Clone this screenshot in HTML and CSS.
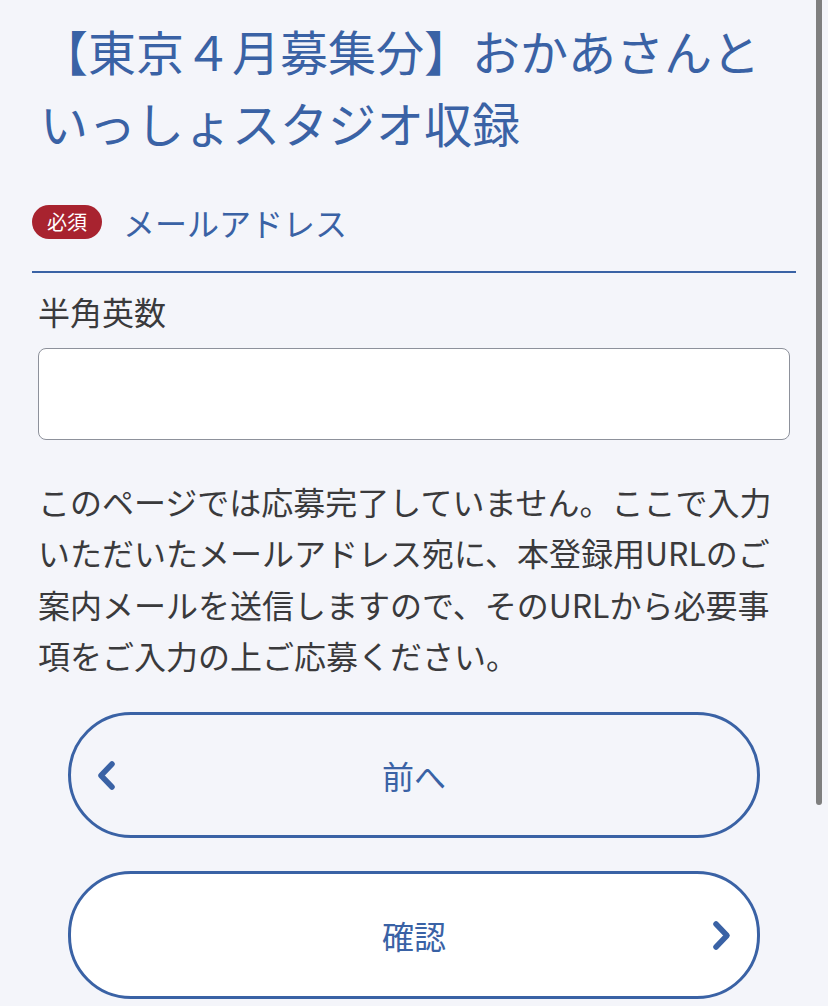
FILE: index.html
```html
<!DOCTYPE html>
<html lang="ja">
<head>
<meta charset="utf-8">
<title>メールアドレス入力</title>
<link rel="stylesheet" href="styles.css">
</head>
<body>
<main class="page">
  <h1 class="title">【東京４月募集分】おかあさんといっしょスタジオ収録</h1>

  <div class="field-head">
    <span class="badge">必須</span>
    <span class="field-name">メールアドレス</span>
  </div>

  <div class="field-body">
    <label class="hint" for="email">半角英数</label>
    <input class="text-input" id="email" type="email">
    <p class="note">このページでは応募完了していません。ここで入力いただいたメールアドレス宛に、本登録用URLのご案内メールを送信しますので、そのURLから必要事項をご入力の上ご応募ください。</p>
  </div>

  <div class="actions">
    <button class="btn btn-back" type="button">
      <svg class="chev" viewBox="0 0 24 32" width="24" height="32" aria-hidden="true"><polyline points="17,5 6,16.5 17,28" fill="none" stroke="currentColor" stroke-width="5.5" stroke-linecap="round" stroke-linejoin="round"/></svg>
      <span class="btn-label">前へ</span>
      <span></span>
    </button>
    <button class="btn btn-next" type="button">
      <span></span>
      <span class="btn-label">確認</span>
      <svg class="chev chev-right" viewBox="0 0 24 32" width="24" height="32" aria-hidden="true"><polyline points="7,5 18,16.5 7,28" fill="none" stroke="currentColor" stroke-width="5.5" stroke-linecap="round" stroke-linejoin="round"/></svg>
    </button>
  </div>
</main>
<div class="scroll-indicator"></div>
</body>
</html>
```

FILE: styles.css
```css
html, body {
  margin: 0;
  padding: 0;
  overflow: hidden;
  background: #f4f5fa;
}

body {
  font-family: "Noto Sans CJK JP", "Noto Sans", sans-serif;
  color: #3a3a3c;
}

.page {
  padding: 0 32px;
}

.title {
  margin: 14px 0 0;
  padding: 0 6px 0 8px;
  font-size: 48px;
  line-height: 72px;
  font-weight: 400;
  color: #3a62a5;
}

.field-head {
  display: flex;
  align-items: center;
  gap: 21px;
  margin-top: 40px;
  padding-bottom: 25px;
  border-bottom: 2px solid #3a62a5;
}

.badge {
  display: flex;
  align-items: center;
  justify-content: center;
  width: 70px;
  height: 34px;
  border-radius: 17px;
  background: #a8232f;
  color: #ffffff;
  font-size: 20px;
  line-height: 1;
}

.field-name {
  font-size: 32px;
  line-height: 48px;
  color: #3a62a5;
}

.field-body {
  padding: 0 6px;
}

.hint {
  display: block;
  margin-top: 14px;
  font-size: 32px;
  line-height: 48px;
  color: #3a3a3c;
}

.text-input {
  display: block;
  box-sizing: border-box;
  width: 100%;
  height: 92px;
  margin-top: 13px;
  border: 1.5px solid #8d919b;
  border-radius: 8px;
  background: #ffffff;
  font-size: 32px;
  padding: 0 16px;
  outline: none;
}

.note {
  margin: 36px 0 0;
  font-size: 32px;
  line-height: 51.3px;
  color: #3a3a3c;
}

.actions {
  display: flex;
  flex-direction: column;
  gap: 33px;
  padding: 0 36px;
  margin-top: 31px;
}

.btn {
  display: grid;
  grid-template-columns: 1fr auto 1fr;
  align-items: center;
  box-sizing: border-box;
  width: 100%;
  height: 126px;
  padding: 0 24px;
  border: 3px solid #3a62a5;
  border-radius: 63px;
  background: transparent;
  color: #3a62a5;
  font-family: "Noto Sans CJK JP", "Noto Sans", sans-serif;
  font-size: 32px;
  line-height: 48px;
  cursor: pointer;
}

.btn-next {
  background: #ffffff;
  height: 128px;
}

.btn-label {
  text-align: center;
}

.chev {
  display: block;
  color: #3a62a5;
}

.chev-right {
  justify-self: end;
}

.scroll-indicator {
  position: fixed;
  top: 0;
  right: 6px;
  width: 6px;
  height: 805px;
  border-radius: 0 0 3px 3px;
  background: #7f7f7f;
}
```
